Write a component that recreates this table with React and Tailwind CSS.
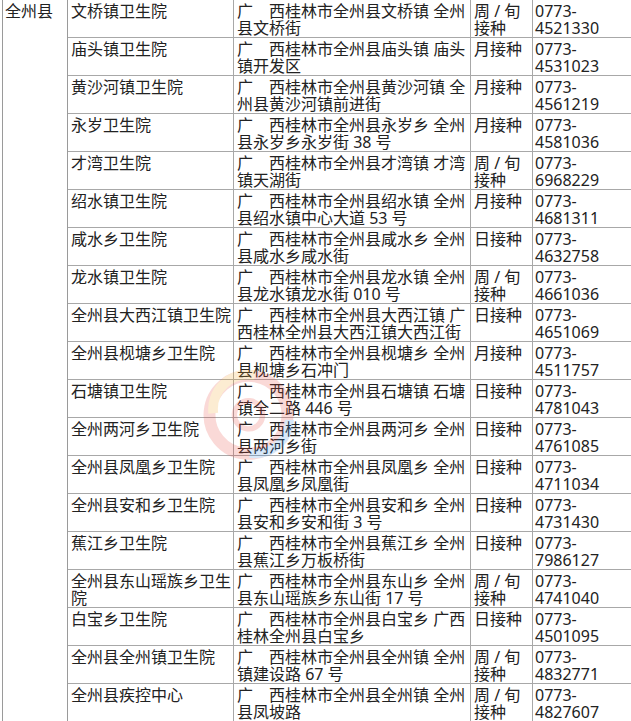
import React from "react";

const rows = [
  ["文桥镇卫生院", ["广　西桂林市全州县文桥镇 全州", "县文桥街"], "周 / 旬", "4521330"],
  ["庙头镇卫生院", ["广　西桂林市全州县庙头镇 庙头", "镇开发区"], "月接种", "4531023"],
  ["黄沙河镇卫生院", ["广　西桂林市全州县黄沙河镇 全", "州县黄沙河镇前进街"], "月接种", "4561219"],
  ["永岁卫生院", ["广　西桂林市全州县永岁乡 全州", "县永岁乡永岁街 38 号"], "月接种", "4581036"],
  ["才湾卫生院", ["广　西桂林市全州县才湾镇 才湾", "镇天湖街"], "周 / 旬", "6968229"],
  ["绍水镇卫生院", ["广　西桂林市全州县绍水镇 全州", "县绍水镇中心大道 53 号"], "月接种", "4681311"],
  ["咸水乡卫生院", ["广　西桂林市全州县咸水乡 全州", "县咸水乡咸水街"], "日接种", "4632758"],
  ["龙水镇卫生院", ["广　西桂林市全州县龙水镇 全州", "县龙水镇龙水街 010 号"], "周 / 旬", "4661036"],
  ["全州县大西江镇卫生院", ["广　西桂林市全州县大西江镇 广", "西桂林全州县大西江镇大西江街"], "日接种", "4651069"],
  ["全州县枧塘乡卫生院", ["广　西桂林市全州县枧塘乡 全州", "县枧塘乡石冲门"], "月接种", "4511757"],
  ["石塘镇卫生院", ["广　西桂林市全州县石塘镇 石塘", "镇全二路 446 号"], "日接种", "4781043"],
  ["全州两河乡卫生院", ["广　西桂林市全州县两河乡 全州", "县两河乡街"], "日接种", "4761085"],
  ["全州县凤凰乡卫生院", ["广　西桂林市全州县凤凰乡 全州", "县凤凰乡凤凰街"], "日接种", "4711034"],
  ["全州县安和乡卫生院", ["广　西桂林市全州县安和乡 全州", "县安和乡安和街 3 号"], "日接种", "4731430"],
  ["蕉江乡卫生院", ["广　西桂林市全州县蕉江乡 全州", "县蕉江乡万板桥街"], "日接种", "7986127"],
  [["全州县东山瑶族乡卫生", "院"], ["广　西桂林市全州县东山乡 全州", "县东山瑶族乡东山街 17 号"], "周 / 旬", "4741040"],
  ["白宝乡卫生院", ["广　西桂林市全州县白宝乡 广西", "桂林全州县白宝乡"], "日接种", "4501095"],
  ["全州县全州镇卫生院", ["广　西桂林市全州县全州镇 全州", "镇建设路 67 号"], "周 / 旬", "4832771"],
  ["全州县疾控中心", ["广　西桂林市全州县全州镇 全州", "县凤坡路"], "周 / 旬", "4827607"],
];

const Lines = ({ text }) => {
  const list = Array.isArray(text) ? text : [text];
  return list.map((t, i) => (
    <div key={i} className="whitespace-nowrap">
      {t}
    </div>
  ));
};

export default function App() {
  return (
    <div
      className="relative w-[631px] h-[721px] overflow-hidden bg-white pl-[2px] text-[#222] text-[16px] leading-[17px]"
      style={{ fontFamily: '"Noto Sans", "Noto Sans CJK SC", sans-serif' }}
    >
      <table className="-mt-px table-fixed border-collapse w-[640px]">
        <colgroup>
          <col className="w-[65px]" />
          <col className="w-[166px]" />
          <col className="w-[237px]" />
          <col className="w-[62px]" />
          <col className="w-[110px]" />
        </colgroup>
        <tbody>
          {rows.map(([name, addr, freq, phone], i) => (
            <tr key={i} className="h-[38px]">
              {i === 0 && (
                <td
                  rowSpan={rows.length}
                  className="border border-[#9a9a9a] align-top pl-[2px] pt-[3px]"
                >
                  全州县
                </td>
              )}
              <td className="border border-[#a8a8a8] align-top pl-[3px] pt-[3px]">
                <Lines text={name} />
              </td>
              <td className="border border-[#a8a8a8] align-top pl-[3px] pt-[3px]">
                <Lines text={addr} />
              </td>
              <td className="border border-[#a8a8a8] align-top pl-[3px] pt-[3px]">
                {freq === "周 / 旬" ? <Lines text={["周 / 旬", "接种"]} /> : <Lines text={freq} />}
              </td>
              <td className="border border-[#a8a8a8] align-top pl-[2px] pt-[3px]">
                <Lines text={["0773-", phone]} />
              </td>
            </tr>
          ))}
        </tbody>
      </table>

      {/* faint site watermark */}
      <svg
        className="pointer-events-none absolute left-[160px] top-[250px] opacity-[0.2]"
        width="260"
        height="260"
        viewBox="0 0 240 240"
      >
        <g transform="rotate(-40 120 120)">
          <circle cx="70" cy="120" r="36" fill="none" stroke="#e8453c" strokeWidth="11" />
          <path d="M46 98 A32 32 0 0 1 98 96" fill="none" stroke="#f5a623" strokeWidth="9" />
          <path d="M48 148 A32 32 0 0 0 96 148" fill="none" stroke="#3b8ee6" strokeWidth="8" />
          <circle cx="70" cy="120" r="13" fill="none" stroke="#e8453c" strokeWidth="5" />
        </g>
      </svg>
    </div>
  );
}
